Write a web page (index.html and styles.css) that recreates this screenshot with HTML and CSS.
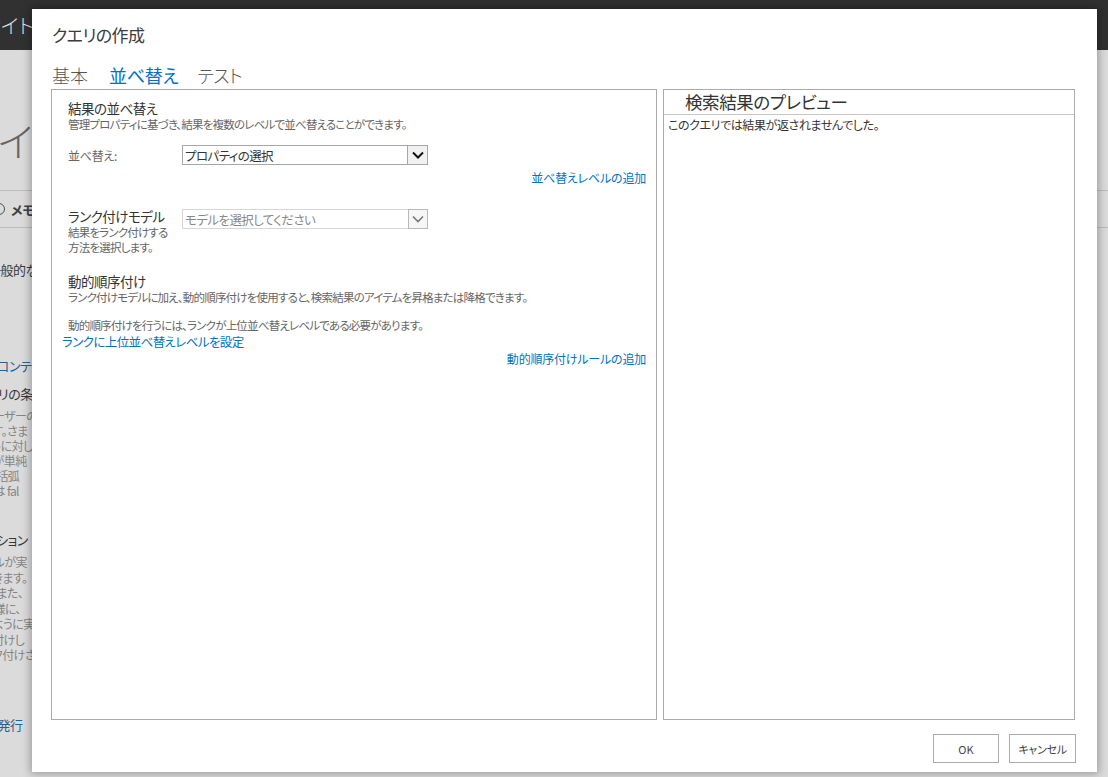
FILE: index.html
```html
<!DOCTYPE html>
<html lang="ja">
<head>
<meta charset="utf-8">
<link rel="stylesheet" href="styles.css">
</head>
<body>
<div class="page">
  <div class="suitebar"><span class="site-title">サイト</span></div>
  <div class="page-body">
    <div class="big-title">サイ</div>
    <div class="tabline"><span class="circle"></span><span class="memo">メモ</span></div>
    <div class="bg-text dark t1">一般的な</div>
    <div class="bg-text blue t2">ンコンテ</div>
    <div class="bg-text dark t3">エリの条</div>
    <div class="bg-lines">
      <div>ユーザーの</div>
      <div>ます。さま</div>
      <div>ントに対し</div>
      <div>ルが単純</div>
      <div>す。括弧</div>
      <div>合は fal</div>
    </div>
    <div class="bg-text dark t4">ーション</div>
    <div class="bg-lines two">
      <div>ベルが実</div>
      <div>できます。</div>
      <div>す。また、</div>
      <div>同様に、</div>
      <div>のように実</div>
      <div>ク付けし</div>
      <div>ンク付けさ</div>
    </div>
    <div class="bg-text blue t5">を発行</div>
  </div>
</div>
<div class="overlay"></div>
<div class="dialog">
  <div class="dlg-title">クエリの作成</div>
  <div class="tabs">
    <span class="tab">基本</span>
    <span class="tab active">並べ替え</span>
    <span class="tab">テスト</span>
  </div>
  <div class="panels">
    <div class="panel left">
      <div class="sec-title">結果の並べ替え</div>
      <div class="desc">管理プロパティに基づき、結果を複数のレベルで並べ替えることができます。</div>
      <div class="field-row sort-row">
        <span class="label">並べ替え:</span>
        <div class="select">
          <span class="sel-text">プロパティの選択</span>
          <span class="sel-arrow"><svg width="14" height="10" viewBox="0 0 14 10"><path d="M2 2.5 L7 7.5 L12 2.5" fill="none" stroke="#111" stroke-width="2"/></svg></span>
        </div>
      </div>
      <div class="link-right add-sort">並べ替えレベルの追加</div>
      <div class="field-row rank-row">
        <div class="label-block">
          <div class="sec-title">ランク付けモデル</div>
          <div class="desc">結果をランク付けする<br>方法を選択します。</div>
        </div>
        <div class="select disabled">
          <span class="sel-text">モデルを選択してください</span>
          <span class="sel-arrow"><svg width="14" height="10" viewBox="0 0 14 10"><path d="M2 2.5 L7 7.5 L12 2.5" fill="none" stroke="#777" stroke-width="1.6"/></svg></span>
        </div>
      </div>
      <div class="sec-title dyn-title">動的順序付け</div>
      <div class="desc">ランク付けモデルに加え、動的順序付けを使用すると、検索結果のアイテムを昇格または降格できます。</div>
      <div class="desc note">動的順序付けを行うには、ランクが上位並べ替えレベルである必要があります。</div>
      <div class="link set-rank">ランクに上位並べ替えレベルを設定</div>
      <div class="link-right add-rule">動的順序付けルールの追加</div>
    </div>
    <div class="panel right">
      <div class="preview-head">検索結果のプレビュー</div>
      <div class="preview-msg">このクエリでは結果が返されませんでした。</div>
    </div>
  </div>
  <div class="footer">
    <button class="btn ok">OK</button>
    <button class="btn cancel">キャンセル</button>
  </div>
</div>
</body>
</html>
```
FILE: styles.css
```css
* { box-sizing: border-box; }
html, body { margin: 0; padding: 0; }
body {
  width: 1108px;
  height: 777px;
  overflow: hidden;
  font-family: "Noto Sans CJK JP", "Noto Sans", sans-serif;
  font-feature-settings: "palt";
  background: #e4e4e4;
  position: relative;
}
.page { width: 1108px; height: 777px; }
.suitebar {
  height: 50px;
  background: #343434;
  display: flex;
  align-items: center;
}
.site-title {
  color: #e8e8e8;
  font-size: 20px;
  margin-left: -18px;
  font-weight: 300;
}
.page-body {
  margin-left: -40px;
  padding-top: 70px;
}
.big-title {
  font-size: 40px;
  color: #6a6a6a;
  font-weight: 300;
  line-height: 40px;
  height: 70px;
}
.tabline {
  border-top: 1px solid #c4c4c4;
  border-bottom: 1px solid #c4c4c4;
  height: 38px;
  display: flex;
  align-items: center;
  gap: 6px;
}
.circle {
  display: inline-block;
  width: 12px; height: 12px;
  border: 1px solid #555;
  border-radius: 50%;
  margin-left: 33px;
}
.memo { font-size: 13px; font-weight: bold; color: #444; }
.bg-text { font-size: 13px; line-height: 16px; letter-spacing: -0.5px; }
.dark { color: #3a3a3a; }
.blue { color: #2a6496; }
.t1 { margin-top: 34px; margin-left: 28px; }
.t2 { margin-top: 80px; margin-left: 26px; }
.t3 { margin-top: 12px; margin-left: 26px; }
.t4 { margin-top: 34px; margin-left: 24px; }
.t5 { margin-top: 54px; margin-left: 26px; }
.bg-lines {
  margin-top: 6px;
  margin-left: 22px;
  font-size: 12px;
  line-height: 15px;
  color: #8a8a8a;
  letter-spacing: -0.6px;
}
.bg-lines.two { margin-top: 6px; line-height: 15.5px; }
.overlay {
  position: absolute;
  inset: 0;
  background: rgba(0,0,0,0.04);
}
.dialog {
  position: absolute;
  left: 32px;
  top: 9px;
  width: 1065px;
  height: 763px;
  background: #fff;
  box-shadow: 0 0 8px 2px rgba(0,0,0,0.28);
  padding: 0 21px 0 19px;
  display: flex;
  flex-direction: column;
  color: #333;
}
.dlg-title {
  font-size: 17px;
  line-height: 24px;
  margin-top: 14px;
  margin-left: 1px;
  color: #3c3c3c;
  font-weight: 400;
  letter-spacing: -0.6px;
}
.tabs {
  display: flex;
  gap: 19px;
  margin-top: 16px;
  margin-left: 1px;
  font-size: 18px;
  line-height: 24px;
  color: #555;
  font-weight: 300;
}
.tabs .tab:last-child { letter-spacing: -0.5px; }
.tab.active { color: #0072c6; font-weight: 400; margin-left: 2px; letter-spacing: -0.3px; }
.panels {
  display: flex;
  gap: 6px;
  margin-top: 2px;
  height: 631px;
}
.panel { border: 1px solid #ababab; height: 100%; }
.panel.left { width: 606px; padding: 10px 10px 0 16px; }
.panel.right { width: 412px; }
.sec-title { font-size: 13.5px; line-height: 17px; color: #333; letter-spacing: -0.5px; }
.desc { font-size: 11.5px; line-height: 15px; color: #666; letter-spacing: -0.8px; }
.field-row { display: flex; }
.sort-row { margin-top: 13px; align-items: center; }
.label { width: 114px; font-size: 12px; color: #666; letter-spacing: -0.3px; }
.select {
  width: 246px;
  height: 20px;
  border: 1px solid #a6a6a6;
  display: flex;
  align-items: center;
  justify-content: space-between;
  background: #fff;
}
.sel-text { font-size: 12.5px; padding-left: 2px; color: #333; letter-spacing: -0.6px; }
.sel-arrow {
  width: 20px;
  height: 18px;
  border-left: 1px solid #a6a6a6;
  background: #f1f1f1;
  display: flex;
  align-items: center;
  justify-content: center;
}
.select.disabled { border-color: #d6d6d6; }
.select.disabled .sel-text { color: #888; }
.select.disabled .sel-arrow { border: 1px solid #b9b9b9; background: #f6f6f6; height: 20px; margin-right: -1px; }
.link-right {
  text-align: right;
  font-size: 12px;
  color: #0072c6;
  line-height: 16px;
  letter-spacing: -0.2px;
}
.add-sort { margin-top: 5px; }
.rank-row { margin-top: 22px; }
.label-block { width: 114px; }
.rank-row .select { margin-top: 1px; }
.dyn-title { margin-top: 18px; }
.note { margin-top: 13px; }
.link {
  font-size: 12.5px;
  line-height: 17px;
  color: #0072c6;
  margin-left: -6px;
  letter-spacing: -0.6px;
}
.add-rule { margin-top: 1px; }
.preview-head {
  font-size: 17.5px;
  line-height: 24px;
  padding-left: 21px;
  border-bottom: 1px solid #c6c6c6;
  color: #333;
  letter-spacing: -0.4px;
}
.preview-msg { font-size: 12px; line-height: 16px; padding: 2px 4px; color: #333; letter-spacing: -0.4px; }
.footer {
  display: flex;
  justify-content: flex-end;
  gap: 10px;
  margin-top: 14px;
}
.btn {
  font-family: "Noto Sans CJK JP", "Noto Sans", sans-serif;
  font-feature-settings: "palt";
  font-size: 11px;
  height: 29px;
  background: #fff;
  border: 1px solid #ababab;
  color: #444;
  padding: 0;
}
.btn.ok { width: 66px; }
.btn.cancel { width: 67px; letter-spacing: -0.3px; }
```
